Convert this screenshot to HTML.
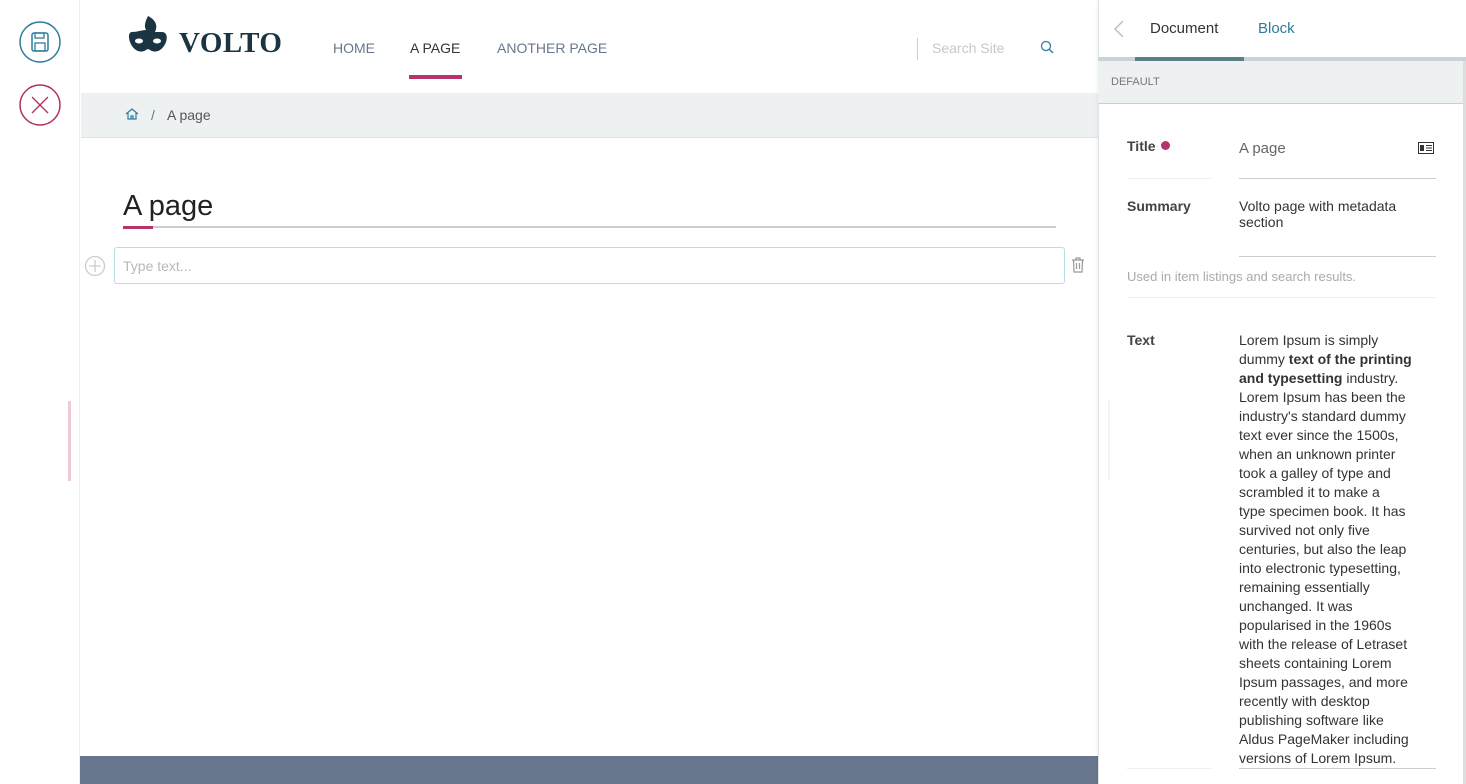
<!DOCTYPE html>
<html><head><meta charset="utf-8"><style>
*{margin:0;padding:0;box-sizing:border-box}
body{width:1466px;height:784px;overflow:hidden;background:#fff;font-family:"Liberation Sans",sans-serif;position:relative;color:#333}
.abs{position:absolute}
</style></head><body>
<!-- left toolbar -->
<div class="abs" style="left:0;top:0;width:80px;height:784px;background:#fff;border-right:1px solid #eceff1"></div>
<svg class="abs" style="left:19px;top:21px" width="42" height="42" viewBox="0 0 42 42"><circle cx="21" cy="21" r="20" fill="none" stroke="#2e7d9b" stroke-width="1.5"/><rect x="13" y="12" width="16" height="18" rx="2" fill="none" stroke="#2e7d9b" stroke-width="1.5"/><rect x="16" y="12" width="9" height="5" fill="none" stroke="#2e7d9b" stroke-width="1.3"/><rect x="16" y="22" width="10" height="8" fill="none" stroke="#2e7d9b" stroke-width="1.3"/></svg>
<svg class="abs" style="left:19px;top:84px" width="42" height="42" viewBox="0 0 42 42"><circle cx="21" cy="21" r="20" fill="none" stroke="#b0305f" stroke-width="1.5"/><path d="M13 13L29 29M29 13L13 29" stroke="#b0305f" stroke-width="1.3"/></svg>
<div class="abs" style="left:68px;top:401px;width:3px;height:80px;background:#f0c8d6"></div>

<!-- logo -->
<svg class="abs" style="left:128px;top:16px" width="40" height="42" viewBox="0 0 40 42"><path d="M20 0C17 6 16 10 18 14C14 14 9 16 4 16C1 16 0 20 2 26C5 34 12 38 18 34C19 33 21 33 22 34C28 38 35 34 38 26C40 20 38 16 34 16C31 16 29 16 27 16C30 10 28 4 20 0Z" fill="#1a3442"/><ellipse cx="11" cy="25" rx="4" ry="2.5" fill="#fff"/><ellipse cx="29" cy="25" rx="4" ry="2.5" fill="#fff"/></svg>
<div class="abs" style="left:179px;top:27px;font-family:'Liberation Serif',serif;font-weight:bold;font-size:29px;color:#1a3442;letter-spacing:0.5px">VOLTO</div>

<!-- nav -->
<div class="abs" style="left:333px;top:40px;font-size:14px;color:#68778d">HOME</div>
<div class="abs" style="left:410px;top:40px;font-size:14px;color:#333">A PAGE</div>
<div class="abs" style="left:409px;top:75px;width:53px;height:4px;background:#b8336a"></div>
<div class="abs" style="left:497px;top:40px;font-size:14px;color:#68778d">ANOTHER PAGE</div>
<div class="abs" style="left:917px;top:38px;width:1px;height:22px;background:#ccc"></div>
<div class="abs" style="left:932px;top:40px;font-size:14px;color:#c7c7c7">Search Site</div>
<svg class="abs" style="left:1040px;top:40px" width="15" height="15" viewBox="0 0 15 15"><circle cx="6" cy="6" r="4.5" fill="none" stroke="#2e7d9b" stroke-width="1.3"/><path d="M9.5 9.5L13 13" stroke="#2e7d9b" stroke-width="1.3"/></svg>

<!-- breadcrumb -->
<div class="abs" style="left:81px;top:93px;width:1017px;height:45px;background:#edf1f2;border-bottom:1px solid #dde2e4"></div>
<svg class="abs" style="left:125px;top:107px" width="14" height="14" viewBox="0 0 14 14"><path d="M1 7L7 2L13 7M3 6V12H11V6M6 12V9H8V12" fill="none" stroke="#2e7d9b" stroke-width="1.2"/></svg>
<div class="abs" style="left:151px;top:107px;font-size:14px;color:#68778d">/</div>
<div class="abs" style="left:167px;top:107px;font-size:14px;color:#555">A page</div>

<!-- title -->
<div class="abs" style="left:123px;top:190px;font-size:29px;color:#222">A page</div>
<div class="abs" style="left:123px;top:226px;width:933px;height:2px;background:#c7cdd0"></div>
<div class="abs" style="left:123px;top:226px;width:30px;height:3px;background:#b8336a"></div>

<svg class="abs" style="left:84px;top:255px" width="22" height="22" viewBox="0 0 22 22"><circle cx="11" cy="11" r="9.5" fill="none" stroke="#c7cdd0" stroke-width="1.3"/><path d="M11 5V17M5 11H17" stroke="#c7cdd0" stroke-width="1.3"/></svg>
<div class="abs" style="left:114px;top:247px;width:951px;height:37px;border:1px solid #b5dfe6;border-radius:3px"></div>
<div class="abs" style="left:123px;top:258px;font-size:14px;color:#b8b8b8">Type text...</div>
<svg class="abs" style="left:1071px;top:257px" width="14" height="16" viewBox="0 0 14 16"><path d="M1 3H13M5 3V1H9V3M2.5 3L3 15H11L11.5 3M5.5 6V12M8.5 6V12" fill="none" stroke="#999" stroke-width="1.2"/></svg>

<!-- footer band -->
<div class="abs" style="left:80px;top:756px;width:1018px;height:28px;background:#68778d"></div>

<!-- sidebar -->
<div class="abs" style="left:1098px;top:0;width:368px;height:784px;background:#fff;border-left:1px solid #e0e4e6;box-shadow:-1px 0 3px rgba(0,0,0,0.06)"></div>
<svg class="abs" style="left:1112px;top:19px" width="14" height="20" viewBox="0 0 14 20"><path d="M11 2L3 10L11 18" fill="none" stroke="#bbb" stroke-width="1.4"/></svg>
<div class="abs" style="left:1150px;top:20px;font-size:15px;color:#333">Document</div>
<div class="abs" style="left:1258px;top:20px;font-size:15px;color:#2e7d9b">Block</div>
<div class="abs" style="left:1098px;top:57px;width:368px;height:4px;background:#c7d5d8"></div>
<div class="abs" style="left:1135px;top:57px;width:109px;height:4px;background:#5a7f84"></div>
<div class="abs" style="left:1098px;top:61px;width:366px;height:43px;background:#edf1f2;border-bottom:1px solid #c7d0d3"></div>
<div class="abs" style="left:1111px;top:76px;font-size:11px;color:#777">DEFAULT</div>
<div class="abs" style="left:1463px;top:61px;width:3px;height:723px;background:#ddd"></div>

<div class="abs" style="left:1127px;top:138px;font-size:14px;font-weight:bold;color:#444">Title</div>
<div class="abs" style="left:1161px;top:141px;width:9px;height:9px;border-radius:50%;background:#b8336a"></div>
<div class="abs" style="left:1239px;top:140px;font-size:15px;color:#666">A page</div>
<svg class="abs" style="left:1418px;top:142px" width="16" height="12" viewBox="0 0 16 12"><rect x="0.5" y="0.5" width="15" height="11" fill="none" stroke="#333"/><rect x="2" y="3" width="4" height="6" fill="#333"/><path d="M8 3.5H14M8 6H14M8 8.5H14" stroke="#333"/></svg>
<div class="abs" style="left:1127px;top:178px;width:84px;height:1px;background:#eee"></div>
<div class="abs" style="left:1239px;top:178px;width:197px;height:1px;background:#ccc"></div>

<div class="abs" style="left:1127px;top:198px;font-size:14px;font-weight:bold;color:#444">Summary</div>
<div class="abs" style="left:1239px;top:198px;font-size:14px;color:#333;line-height:16px">Volto page with metadata<br>section</div>
<div class="abs" style="left:1239px;top:256px;width:197px;height:1px;background:#ccc"></div>
<div class="abs" style="left:1127px;top:269px;font-size:13px;color:#aaa">Used in item listings and search results.</div>
<div class="abs" style="left:1127px;top:297px;width:309px;height:1px;background:#eee"></div>

<div class="abs" style="left:1127px;top:332px;font-size:14px;font-weight:bold;color:#444">Text</div>
<div class="abs" style="left:1239px;top:331px;font-size:14px;color:#333;line-height:19px;white-space:nowrap">Lorem Ipsum is simply<br>dummy <b>text of the printing</b><br><b>and typesetting</b> industry.<br>Lorem Ipsum has been the<br>industry's standard dummy<br>text ever since the 1500s,<br>when an unknown printer<br>took a galley of type and<br>scrambled it to make a<br>type specimen book. It has<br>survived not only five<br>centuries, but also the leap<br>into electronic typesetting,<br>remaining essentially<br>unchanged. It was<br>popularised in the 1960s<br>with the release of Letraset<br>sheets containing Lorem<br>Ipsum passages, and more<br>recently with desktop<br>publishing software like<br>Aldus PageMaker including<br>versions of Lorem Ipsum.</div>
<div class="abs" style="left:1239px;top:768px;width:197px;height:1px;background:#ccc"></div>
<div class="abs" style="left:1127px;top:768px;width:84px;height:1px;background:#eee"></div>
<div class="abs" style="left:1108px;top:400px;width:2px;height:80px;background:#f0f5f6"></div>
</body></html>
